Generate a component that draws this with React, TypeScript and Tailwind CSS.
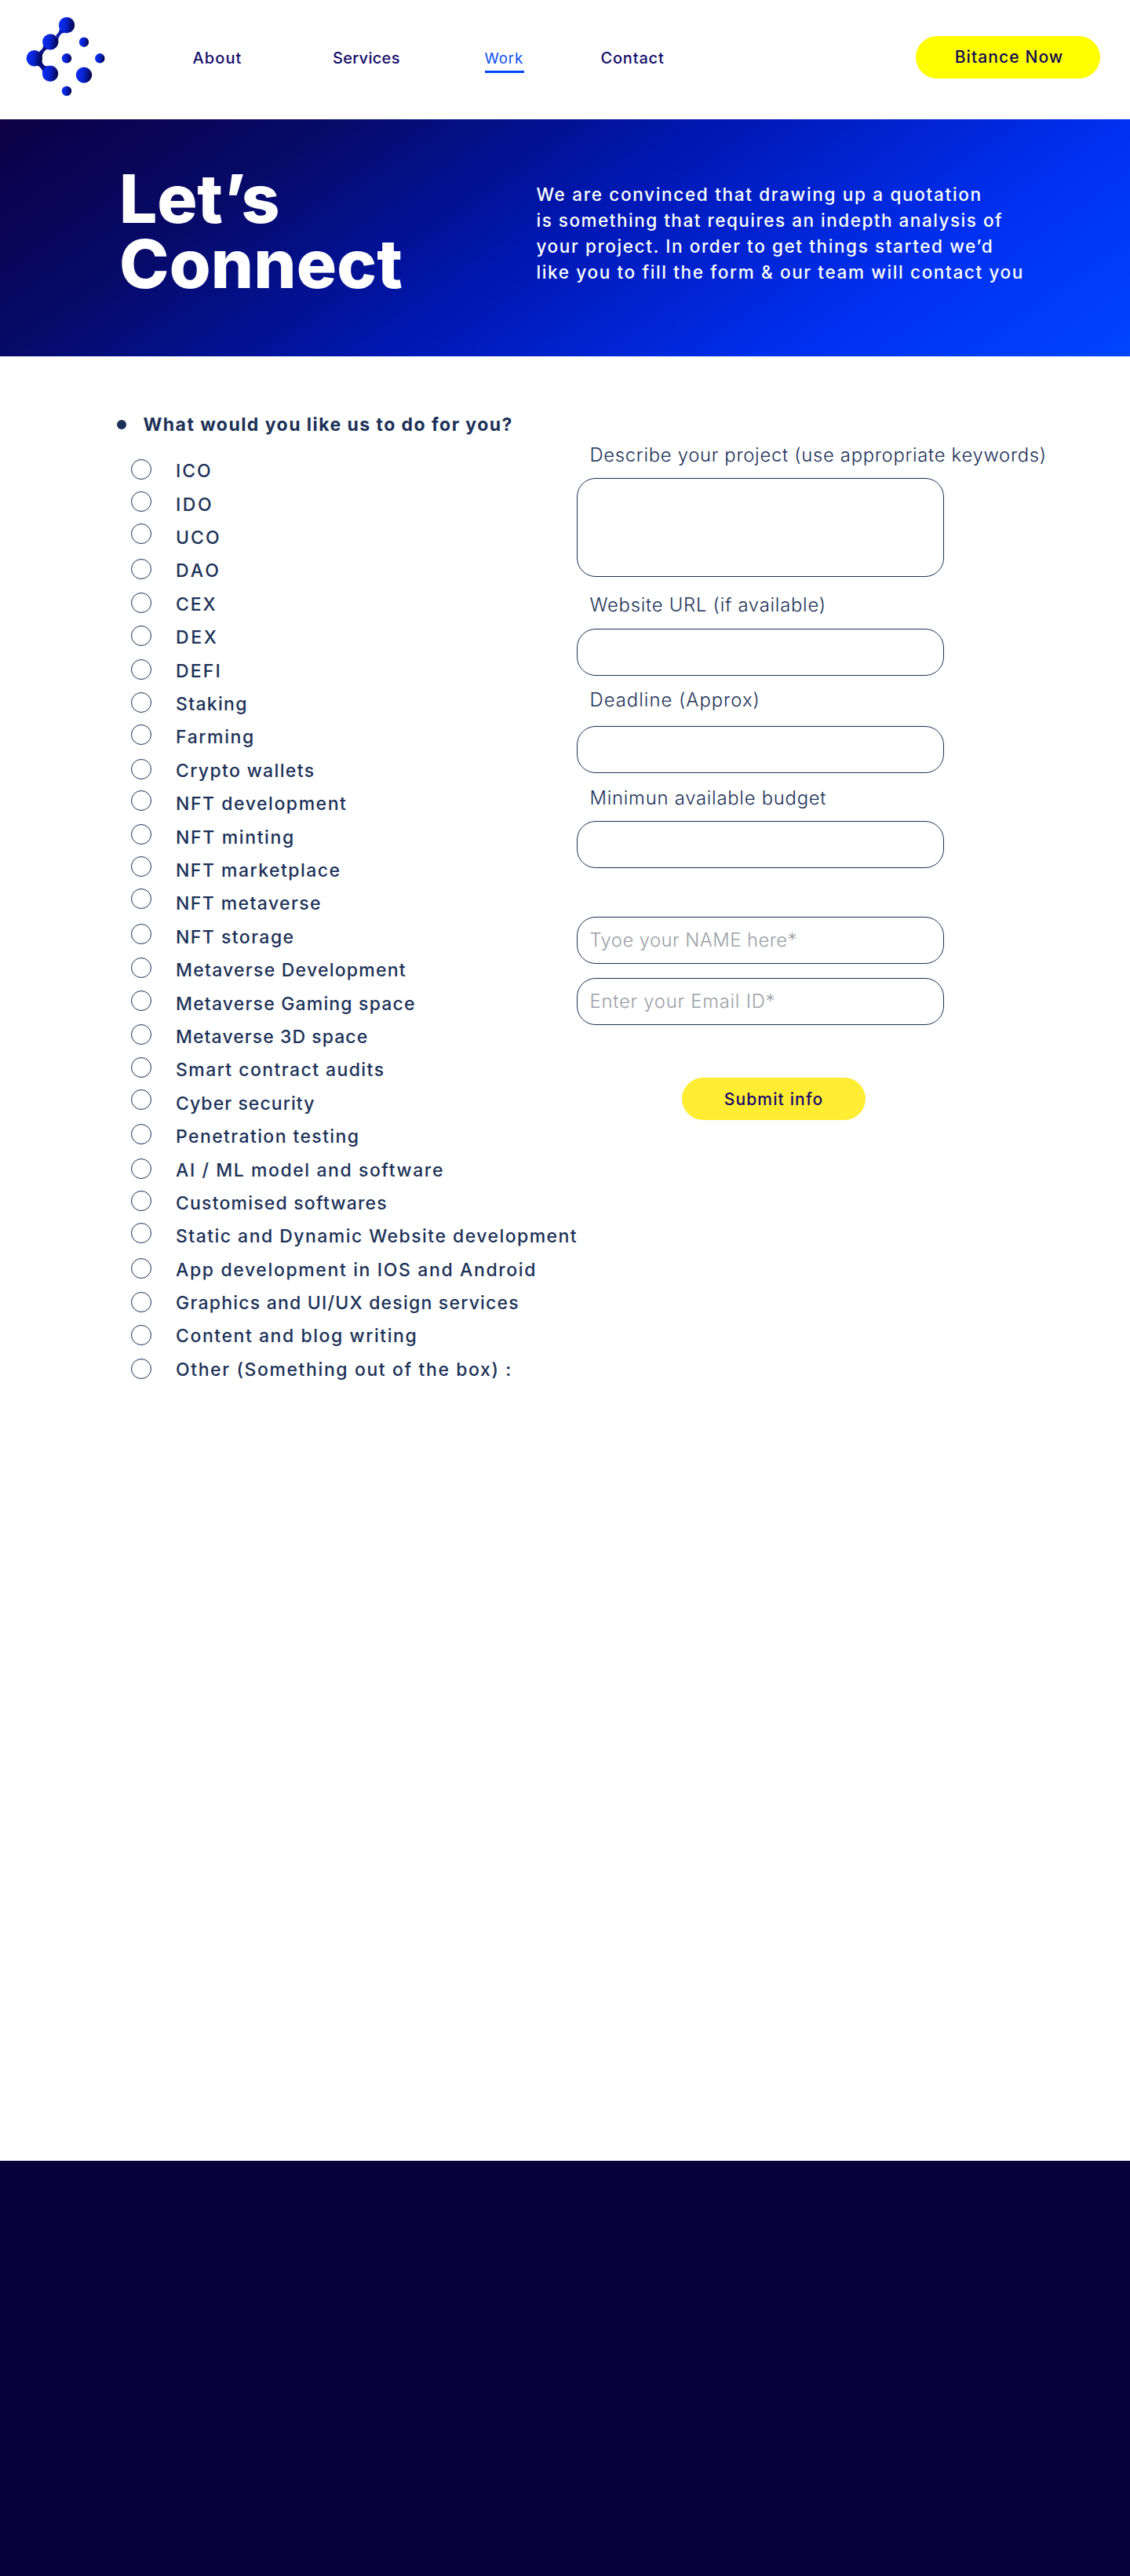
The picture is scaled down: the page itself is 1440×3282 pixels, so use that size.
const services = [
  { label: "ICO", text: "tracking-[1.9px]", dot: "mt-[5.4px]" },
  { label: "IDO", text: "tracking-[2.6px]", dot: "mt-[4.3px]" },
  { label: "UCO", text: "tracking-[2px]", dot: "mt-[2.9px]" },
  { label: "DAO", text: "tracking-[3px]", dot: "mt-[5.2px]" },
  { label: "CEX", text: "tracking-[1.9px]", dot: "mt-[6.1px]" },
  { label: "DEX", text: "tracking-[2.6px]", dot: "mt-[5.7px]" },
  { label: "DEFI", text: "tracking-[2.2px]", dot: "mt-[6px]" },
  { label: "Staking", text: "tracking-[1.3px]", dot: "mt-[5.9px]" },
  { label: "Farming", text: "tracking-[1.6px]", dot: "mt-[4.2px]" },
  { label: "Crypto wallets", text: "tracking-[1.36px]", dot: "mt-[5.8px]" },
  { label: "NFT development", text: "tracking-[1.55px]", dot: "mt-[3.7px]" },
  { label: "NFT minting", text: "tracking-[1.64px]", dot: "mt-[4px]" },
  { label: "NFT marketplace", text: "tracking-[1.47px]", dot: "mt-[2.9px]" },
  { label: "NFT metaverse", text: "tracking-[1.4px]", dot: "mt-[1.5px]" },
  { label: "NFT storage", text: "tracking-[1.45px]", dot: "mt-[4.1px]" },
  { label: "Metaverse Development", text: "tracking-[1.24px]", dot: "mt-[4.7px]" },
  { label: "Metaverse Gaming space", text: "tracking-[1.18px]", dot: "mt-[4.3px]" },
  { label: "Metaverse 3D space", text: "tracking-[1.06px]", dot: "mt-[4.9px]" },
  { label: "Smart contract audits", text: "tracking-[1.43px]", dot: "mt-[4.2px]" },
  { label: "Cyber security", text: "tracking-[1.07px]", dot: "mt-[3.1px]" },
  { label: "Penetration testing", text: "tracking-[1.4px]", dot: "mt-[4.7px]" },
  { label: "AI / ML model and software", text: "tracking-[1.57px]", dot: "mt-[6.3px]" },
  { label: "Customised softwares", text: "tracking-[1.2px]", dot: "mt-[5.2px]" },
  { label: "Static and Dynamic Website development", text: "tracking-[1.46px]", dot: "mt-[3.5px]" },
  { label: "App development in IOS and Android", text: "tracking-[1.63px]", dot: "mt-[6.1px]" },
  { label: "Graphics and UI/UX design services", text: "tracking-[1.22px]", dot: "mt-[6.7px]" },
  { label: "Content and blog writing", text: "tracking-[1.56px]", dot: "mt-[6.3px]" },
  { label: "Other (Something out of the box) :", text: "tracking-[1.6px]", dot: "mt-[6.9px]" },
];

const nodes = [
  [85, 32, 10.2],
  [64.3, 53.4, 10.2],
  [43.8, 74.3, 10.2],
  [64, 93.7, 10.2],
  [107, 53.7, 6.2],
  [85, 74.3, 6.2],
  [127.3, 74.3, 6.2],
  [107, 95.6, 10.2],
  [85, 116, 6.2],
];

function Logo() {
  return (
    <svg width="150" height="152" viewBox="0 0 150 152" className="shrink-0">
      <defs>
        <linearGradient id="node" x1="0" y1="0" x2="1" y2="0.1">
          <stop offset="0.1" stopColor="#0a2cf2" />
          <stop offset="0.5" stopColor="#0823d0" />
          <stop offset="1" stopColor="#05054c" />
        </linearGradient>
      </defs>
      <g fill="#0a1cb0">
        <path d="M76 36 Q76 41 71.500 44.500 L74 55 Q73 47.500 79 42.300 L87 41 Z" />
        <path d="M55 58 Q55.500 62 50 65.500 L53.500 73 Q54.500 65.500 60 62.500 L66 62 Z" fill="#070f80" />
        <path d="M53.500 72 Q52.500 79.500 56 83 Q60 85.500 66 84 L55 94 Q53.500 86.500 48.500 84 L44 82 Z" fill="#070f80" />
      </g>
      {nodes.map(([x, y, r]) => (
        <circle key={`${x}-${y}`} cx={x} cy={y} r={r} fill="url(#node)" />
      ))}
    </svg>
  );
}

function Header() {
  return (
    <header className="flex h-[152px] items-start bg-white">
      <Logo />
      <nav className="ml-[95.500px] mt-[60px] flex text-[20px] font-medium leading-7 text-[#130c69]">
        <a className="w-[178.500px] tracking-[1.1px]">About</a>
        <a className="w-[193.500px] tracking-[0.3px]">Services</a>
        <a className="w-[148px]">
          <span className="block w-[50.500px] border-b-[3px] border-[#0045ff] pb-[2px] text-[18.6px] font-normal tracking-[0.9px] text-[#0a4cf5]">
            Work
          </span>
        </a>
        <a className="w-[110px] tracking-[0.8px]">Contact</a>
      </nav>
      <button className="ml-[291px] mt-[46px] h-[54px] w-[235px] rounded-full bg-[#ffff00] pb-[1px] pl-[4px] text-[21px] font-medium tracking-[1.1px] text-[#0f0757]">
        Bitance Now
      </button>
    </header>
  );
}

function Hero() {
  return (
    <section className="flex h-[302px] bg-[linear-gradient(145deg,#0d0045_0%,#060a68_23%,#0018b4_50%,#0030f0_77%,#0045ff_100%)] text-white">
      <h1 className="ml-[152px] mt-[60px] w-[531.500px] text-[85.500px] font-extrabold leading-[83px]">
        <span className="block tracking-[-0.2px]">Let’s</span>
        <span className="block tracking-[0.14px]">Connect</span>
      </h1>
      <p className="mt-[79px] whitespace-nowrap text-[22.500px] font-medium leading-[33px]">
        <span className="block tracking-[1.69px]">We are convinced that drawing up a quotation</span>
        <span className="block tracking-[1.51px]">is something that requires an indepth analysis of</span>
        <span className="block tracking-[1.61px]">your project. In order to get things started we’d</span>
        <span className="block tracking-[1.64px]">like you to fill the form &amp; our team will contact you</span>
      </p>
    </section>
  );
}

function ServiceList() {
  return (
    <div className="w-[734.500px] shrink-0 pl-[149px] pt-[71px]">
      <h2 className="flex h-[32px] items-center whitespace-nowrap text-[23px] font-bold leading-8 tracking-[1.45px]">
        <span className="mr-[21.500px] size-[12px] rounded-full bg-[#1b3157]" />
        What would you like us to do for you?
      </h2>
      <ul className="mt-[22.3px] pl-[18px]">
        {services.map((s) => (
          <li key={s.label} className="flex h-[42.4px] items-start whitespace-nowrap text-[23px] font-medium leading-[43.4px]">
            <svg className={`${s.dot} mr-[31px] size-[26px] shrink-0`} viewBox="0 0 26 26">
              <circle cx="13" cy="13" r="12.500" fill="none" stroke="#1b3157" strokeWidth="1" />
            </svg>
            <span className={s.text}>{s.label}</span>
          </li>
        ))}
      </ul>
    </div>
  );
}

const labelClass = "block h-[30px] whitespace-nowrap pl-[17px] text-[23.8px] font-light leading-[31px]";
const boxClass =
  "block w-full rounded-[24px] border border-[#1b3157] bg-white pb-[2px] pl-[16px] text-[23.8px] font-light placeholder:text-[#9b9fa8] placeholder:opacity-100 outline-none resize-none";

function ContactForm() {
  return (
    <form className="w-[468px] pt-[110px]">
      <label className={`${labelClass} tracking-[0.72px]`}>Describe your project (use appropriate keywords)</label>
      <textarea className={`${boxClass} mt-[15px] h-[126px]`} />
      <label className={`${labelClass} mt-[20px] tracking-[0.77px]`}>Website URL (if available)</label>
      <input className={`${boxClass} mt-[16px] h-[60px]`} />
      <label className={`${labelClass} mt-[15px] tracking-[1.04px]`}>Deadline (Approx)</label>
      <input className={`${boxClass} mt-[19px] h-[60px]`} />
      <label className={`${labelClass} mt-[16px] tracking-[0.77px]`}>Minimun available budget</label>
      <input className={`${boxClass} mt-[15px] h-[60px]`} />
      <input className={`${boxClass} mt-[62px] h-[60px] tracking-[0.46px]`} placeholder="Tyoe your NAME here*" />
      <input className={`${boxClass} mt-[18px] h-[60px] tracking-[0.77px]`} placeholder="Enter your Email ID*" />
      <button
        type="button"
        className="ml-[134px] mt-[67px] block h-[54px] w-[234px] rounded-full bg-[#ffed33] pl-[1px] pt-[1px] text-[21px] font-medium tracking-[1.15px] text-[#16096b]"
      >
        Submit info
      </button>
    </form>
  );
}

export default function App() {
  return (
    <div className="w-[1440px] bg-white font-['Inter','Liberation_Sans',sans-serif]">
      <Header />
      <Hero />
      <main className="flex h-[2299px] items-start text-[#1b3157]">
        <ServiceList />
        <ContactForm />
      </main>
      <footer className="h-[529px] bg-[#07003b]" />
    </div>
  );
}
